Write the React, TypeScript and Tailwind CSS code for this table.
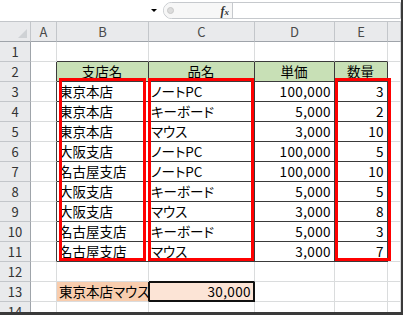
import React from "react";

const rows: string[][] = [
  ["東京本店", "ノートPC", "100,000", "3"],
  ["東京本店", "キーボード", "5,000", "2"],
  ["東京本店", "マウス", "3,000", "10"],
  ["大阪支店", "ノートPC", "100,000", "5"],
  ["名古屋支店", "ノートPC", "100,000", "10"],
  ["大阪支店", "キーボード", "5,000", "5"],
  ["大阪支店", "マウス", "3,000", "8"],
  ["名古屋支店", "キーボード", "5,000", "3"],
  ["名古屋支店", "マウス", "3,000", "7"],
];

function inData(r: number, c: number) {
  return r >= 2 && r <= 11 && c >= 2 && c <= 5;
}

function Cell({ r, c }: { r: number; c: number }) {
  const isC13 = r === 13 && c === 3;
  const rightDark = inData(r, c) || inData(r, c + 1);
  const bottomDark = inData(r, c) || inData(r + 1, c);
  let bg = "bg-white";
  let content: React.ReactNode = null;
  let align = "justify-start";
  let num = false;
  if (r === 2 && c >= 2 && c <= 5) {
    bg = "bg-[#c8e0b6]";
    content = ["支店名", "品名", "単価", "数量"][c - 2];
    align = "justify-center";
  } else if (r >= 3 && r <= 11 && c >= 2 && c <= 5) {
    content = rows[r - 3][c - 2];
    num = c >= 4;
    align = num ? "justify-end" : "justify-start";
  } else if (r === 13 && c === 2) {
    bg = "bg-[#f8cdae]";
    content = "東京本店マウス";
  } else if (isC13) {
    bg = "bg-[#fce4d6] shadow-[inset_0_0_0_1px_#111]";
    content = "30,000";
    align = "justify-end";
    num = true;
  }
  let rb = rightDark ? "border-r-[#3a3a3a]" : "border-r-[#dadcdd]";
  let bb = bottomDark ? "border-b-[#3a3a3a]" : "border-b-[#dadcdd]";
  if (isC13) {
    rb = "border-r-[#111]";
    bb = "border-b-[#111]";
  }
  if (r === 13 && c === 2) rb = "border-r-[#111]";
  if (r === 12 && c === 3) bb = "border-b-[#111]";
  return (
    <div
      className={`flex items-center whitespace-nowrap border-r border-b ${rb} ${bb} ${bg} ${align} pl-[2px] pr-[3px] pt-[1px] text-[13.5px] leading-none text-black ${
        num ? "tracking-[0.4px] [font-feature-settings:normal]" : ""
      }`}
    >
      {content}
    </div>
  );
}

export default function App() {
  const cols = ["A", "B", "C", "D", "E", ""];
  const sheetRows = Array.from({ length: 14 }, (_, i) => i + 1);
  return (
    <div className="w-[403px] h-[315px] overflow-hidden bg-white border-r-2 border-b-[3px] border-[#3a3a3a] flex flex-col font-['Noto_Sans_CJK_JP','Noto_Sans',sans-serif] [font-feature-settings:'palt']">
      {/* formula bar */}
      <div className="h-[22px] shrink-0 flex items-stretch border-b border-[#c3c6ca] bg-white">
        <div className="w-[163px] flex items-center justify-end pr-[6px]">
          <div className="w-0 h-0 border-l-[3px] border-r-[3px] border-t-[3px] border-l-transparent border-r-transparent border-t-black" />
        </div>
        <div className="flex-1 flex items-stretch my-[2px] border border-[#c6c9cd] rounded-l-[9px] bg-white">
          <div className="w-[69px] flex items-center justify-between pl-[3px] pr-[3px] border-r border-[#c6c9cd] bg-[#f7f7f7] rounded-l-[9px]">
            <div className="w-[7px] h-[7px] rounded-full bg-[#dcdcdc] border border-[#c8c8c8]" />
            <span className="text-[12px] italic font-bold text-[#333] leading-none font-['Liberation_Serif',serif]">
              f<span className="text-[9px]">x</span>
            </span>
          </div>
          <div className="flex-1 bg-white" />
        </div>
      </div>

      {/* sheet */}
      <div className="relative flex-1 overflow-hidden">
        <div className="grid grid-cols-[31px_26px_92px_106px_80px_53px_1fr] grid-rows-[20px_repeat(14,20px)]">
          <div className="relative bg-[#e9eaec] border-r border-b border-r-[#c3c6ca] border-b-[#9fa4aa]">
            <div className="absolute right-[3px] bottom-[3px] w-[9px] h-[9px] bg-[#cfd2d5] [clip-path:polygon(100%_0,100%_100%,0_100%)]" />
          </div>
          {cols.map((c, i) => (
            <div
              key={"h" + i}
              className="flex items-center justify-center bg-[#e9eaec] border-r border-b border-r-[#c3c6ca] border-b-[#9fa4aa] text-[13px] text-[#4a4a4a] leading-none"
            >
              {c}
            </div>
          ))}
          {sheetRows.map((r) => (
            <React.Fragment key={r}>
              <div className="flex items-center justify-center bg-[#e9eaec] border-r border-b border-r-[#9fa4aa] border-b-[#c3c6ca] text-[13px] text-[#333] leading-none">
                {r}
              </div>
              {[1, 2, 3, 4, 5, 6].map((c) => (
                <Cell key={c} r={r} c={c} />
              ))}
            </React.Fragment>
          ))}
        </div>

        {/* red highlight boxes */}
        <div className="absolute left-[59px] top-[56px] w-[87px] h-[183px] border-[3px] border-[#ff0000]" />
        <div className="absolute left-[148px] top-[56px] w-[106px] h-[183px] border-[3px] border-[#ff0000]" />
        <div className="absolute left-[335px] top-[56px] w-[56px] h-[183px] border-[3px] border-[#ff0000]" />
      </div>
    </div>
  );
}
